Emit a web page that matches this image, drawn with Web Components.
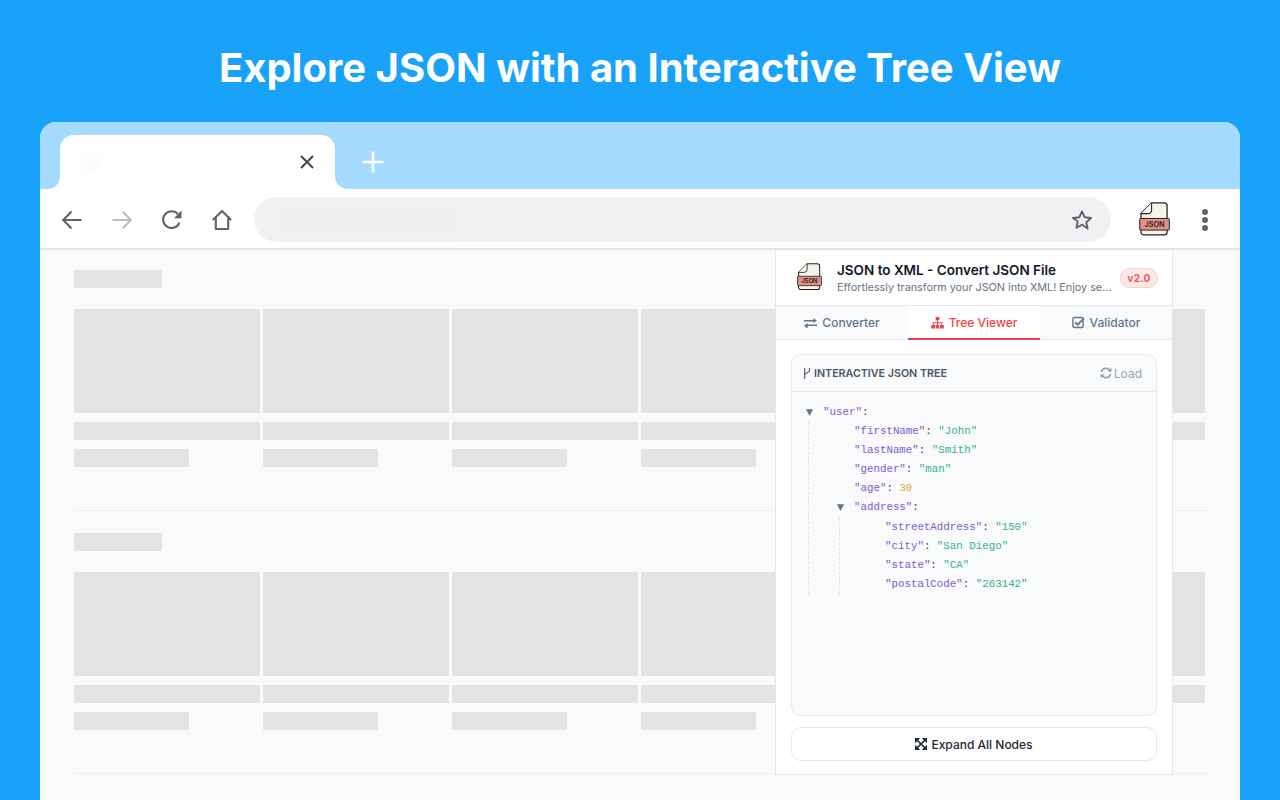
<!DOCTYPE html>
<html lang="en">
<head>
<meta charset="utf-8">
<title>Explore JSON with an Interactive Tree View</title>
<style>
html,body{margin:0;padding:0;height:800px;overflow:hidden;background:#18a2fa}
body{font-family:"Inter","Liberation Sans",sans-serif}
</style>
</head>
<body>
<promo-page heading="Explore JSON with an Interactive Tree View">
  <browser-window>
    <skeleton-section></skeleton-section>
    <skeleton-section></skeleton-section>
    <extension-popup slot="overlay"></extension-popup>
  </browser-window>
</promo-page>
<script>
function comp(name, html, setup){
  customElements.define(name, class extends HTMLElement{
    connectedCallback(){
      if(this.shadowRoot) return;
      const r=this.attachShadow({mode:'open'});
      r.innerHTML = typeof html==='function' ? html(this) : html;
      if(setup) setup(this,r);
    }
  });
}
const I={
 back:'<svg width="24" height="24" viewBox="0 0 24 24" fill="none" stroke="#5f6368" stroke-width="2.1"><path d="M21.5 12H3.500M11.500 3.600L3.200 12l8.300 8.400"/></svg>',
 fwd:'<svg width="24" height="24" viewBox="0 0 24 24" fill="none" stroke="#bdbdbd" stroke-width="2.1"><path d="M2.500 12h18M12.500 3.600l8.300 8.400-8.300 8.400"/></svg>',
 reload:'<svg width="24" height="24" viewBox="0 0 24 24" fill="none"><path d="M19.400 14.600A8.400 8.400 0 1 1 17.800 6" stroke="#5f6368" stroke-width="2.1"/><path d="M21.500 2.600v7.600h-7.600z" fill="#5f6368"/></svg>',
 home:'<svg width="24" height="24" viewBox="0 0 24 24" fill="none" stroke="#5f6368" stroke-width="2.1" stroke-linejoin="round"><path d="M2.800 12L12 3l9.200 9M5.800 10v11h12.400V10"/></svg>',
 star:'<svg width="22" height="22" viewBox="0 0 24 24" fill="none" stroke="#5f6368" stroke-width="2" stroke-linejoin="round"><path d="M12 2.600l2.900 6.400 7 .8-5.200 4.700 1.400 6.900L12 17l-6.100 3.400 1.400-6.900L2.100 9.800l7-.8z"/></svg>',
 close:'<svg width="16" height="16" viewBox="0 0 16 16" stroke="#444" stroke-width="1.9" fill="none"><path d="M2 2l12 12M14 2L2 14"/></svg>',
 plus:'<svg width="24" height="24" viewBox="0 0 24 24" stroke="#fff" stroke-width="2.6" fill="none"><path d="M12 1.500v21M1.500 12h21"/></svg>',
 exchange:'<svg width="13" height="12" viewBox="0 0 13 12" fill="currentColor"><path d="M0 3h9.300V.9L13 3.800 9.300 6V4.600H0zM13 7.400H3.700V6L0 8.700l3.700 2.700V9H13z"/></svg>',
 sitemap:'<svg width="13" height="12" viewBox="0 0 13 12" fill="currentColor"><path d="M4.700 0h3.600v3.300H7V5.200h4.300V8h1.500v3.500H8.900V8h1.400V6.200H7V8h1.200v3.500H4.800V8H6V6.200H2.700V8h1.400v3.500H.2V8h1.500V5.200H6V3.300H4.700z"/></svg>',
 check:'<svg width="13" height="13" viewBox="0 0 13 13" fill="none" stroke="currentColor"><rect x=".9" y="1.500" width="10.200" height="10" rx="1.500" stroke-width="1.400"/><path d="M3.300 6.300l2.400 2.400 6.200-6.300" stroke-width="1.900"/></svg>',
 branch:'<svg width="8" height="11" viewBox="0 0 8 11" fill="none" stroke="#475569" stroke-width="1.100"><path d="M1.700 0v11M6.500 0v2.500C6.500 5 1.700 4.500 1.700 7"/></svg>',
 sync:'<svg width="12" height="12" viewBox="0 0 12 12" fill="none" stroke="#94a3b8" stroke-width="1.700"><path d="M1.500 5A4.700 4.700 0 0 1 9.700 3M10.500 7A4.700 4.700 0 0 1 2.300 9"/><path d="M11.500 .6v4.200H7.300zM.5 11.400V7.200h4.200z" fill="#94a3b8" stroke="none"/></svg>',
 expand:'<svg width="12" height="12" viewBox="0 0 12 12" fill="#1f2937"><path d="M0 0h5.200L0 5.200zM12 0v5.200L6.800 0zM0 12V6.800L5.200 12zM12 12H6.800L12 6.800z"/><path d="M2 2l8 8M10 2l-8 8" stroke="#1f2937" stroke-width="1.700"/></svg>'
};

comp('promo-page', h=>`<style>
:host{display:flex;flex-direction:column;height:800px;overflow:hidden}
h1{margin:0;height:122px;display:flex;align-items:center;justify-content:center;padding-top:13px;box-sizing:border-box;color:#fff;font:700 40px/1 "Inter","Liberation Sans",sans-serif}
.w{padding:0 40px;flex:1;min-height:0;display:flex}
</style><h1>${h.getAttribute('heading')}</h1><div class="w"><slot></slot></div>`);

comp('browser-window',`<style>
:host{display:flex;flex-direction:column;flex:1;border-radius:16px 16px 0 0;overflow:hidden;background:#fafafa;position:relative}
.content{flex:1;min-height:0;padding:0 34px 0 34px;overflow:hidden}
</style>
<tab-strip></tab-strip><browser-toolbar></browser-toolbar>
<div class="content"><slot></slot></div><slot name="overlay"></slot>`);

comp('tab-strip',`<style>
:host{display:flex;align-items:flex-end;height:67px;background:#a3dafd;padding-left:20px;flex:none}
.tab{width:275px;height:54px;background:#fff;border-radius:14px 14px 0 0;position:relative;display:flex;align-items:center;justify-content:flex-end;padding-right:20px;box-sizing:border-box}
.tab::before,.tab::after{content:"";position:absolute;bottom:0;width:12px;height:12px}
.tab::before{left:-12px;background:radial-gradient(circle at 0 0,transparent 11.500px,#fff 12px)}
.tab::after{right:-12px;background:radial-gradient(circle at 100% 0,transparent 11.500px,#fff 12px)}
.ghost{position:absolute;left:20px;top:17px;width:20px;height:20px;border-radius:50%;background:#fbfbfb;filter:blur(2px)}
.add{margin-left:26px;margin-bottom:15px;display:flex}
svg{display:block}
</style><div class="tab"><span class="ghost"></span>${I.close}</div><div class="add">${I.plus}</div>`);

comp('browser-toolbar',`<style>
:host{display:flex;align-items:center;height:61px;box-sizing:border-box;background:#fff;border-bottom:2px solid #e3e3e3;padding:2px 0 0 6.500px;flex:none}
.b{width:50px;height:24px;display:flex;justify-content:center;flex:none}
svg{display:block}
.url{flex:1;height:45px;margin-left:7.500px;background:#f0f1f3;border-radius:23px;display:flex;align-items:center;padding:0 18.500px 0 22px;justify-content:space-between;overflow:hidden}
.blur{width:185px;height:26px;background:#eceef0;filter:blur(4px)}
.ext{width:30px;margin-left:28px;flex:none;display:flex;justify-content:center}
.dots{width:6px;margin:0 32px 0 33px;display:flex;flex-direction:column;gap:2px;flex:none}
.dots i{width:6px;height:6px;border-radius:50%;background:#666}
</style>
<span class="b">${I.back}</span><span class="b">${I.fwd}</span><span class="b">${I.reload}</span><span class="b">${I.home}</span>
<div class="url"><span class="blur"></span>${I.star}</div>
<div class="ext"><json-file-icon width="31"></json-file-icon></div>
<div class="dots"><i></i><i></i><i></i></div>`);

comp('json-file-icon', h=>{const w=+h.getAttribute('width')||32;return `<style>:host{display:block;flex:none;line-height:0}text{font-family:"Inter","Liberation Sans",sans-serif}</style>
<svg width="${w}" height="${w*36/32}" viewBox="0 0 32 36">
<path d="M13 1H26a3 3 0 0 1 3 3V31a3 3 0 0 1-3 3H5a3 3 0 0 1-3-3V12Z" fill="#f6f3ea" stroke="#222" stroke-width="1.300"/>
<path d="M13 1V8q0 4-4 4H2" fill="#fff" stroke="#222" stroke-width="1.100"/>
<rect x=".7" y="17" width="30.600" height="12" rx="1" fill="#e38e84" stroke="#222" stroke-width="1"/>
<text x="16" y="25.800" text-anchor="middle" font-size="7.500" font-weight="600" fill="#1d1d1d">JSON</text>
</svg>`});

comp('skeleton-section',`<style>
:host{display:block;height:261px;box-sizing:border-box;padding-top:20px;border-bottom:1px solid #efefef;margin:0 -2px 2px 0}
.t{width:88px;height:18px;background:#e3e3e3;border-radius:1px;margin-bottom:21px}
.g{display:grid;grid-template-columns:repeat(6,185.500px);column-gap:3.600px}
</style><div class="t"></div><div class="g">
<skeleton-tile></skeleton-tile><skeleton-tile></skeleton-tile><skeleton-tile></skeleton-tile><skeleton-tile></skeleton-tile><skeleton-tile></skeleton-tile><skeleton-tile></skeleton-tile>
</div>`);
comp('skeleton-tile',`<style>
:host{display:flex;flex-direction:column;gap:9px}
div{background:#e3e3e3;border-radius:1px}
.a{height:104px}.b{height:18px}.c{height:17.500px;width:115px}
</style><div class="a"></div><div class="b"></div><div class="c"></div>`);

comp('extension-popup',`<style>
:host{position:absolute;left:735px;top:128px;width:398px;height:525px;box-sizing:border-box;background:#fff;border:1px solid #e5e7eb;border-top:0;display:flex;flex-direction:column;color:#111827;font-family:"Inter","Liberation Sans",sans-serif}
header{height:55px;box-sizing:border-box;display:flex;align-items:center;padding:2px 14px 0 21px;flex:none}
header json-file-icon{margin-top:-2px}
.txt{margin-left:15px;flex:none}
.title{font-size:13.500px;font-weight:600;line-height:17px;white-space:nowrap;color:#111827}
.sub{font-size:10.800px;line-height:17px;color:#64748b;white-space:nowrap}
.badge{margin-left:auto;margin-top:-2px;font-size:10px;font-weight:700;color:#ef5a5a;background:#fde8e8;border:1px solid #fbcfcf;border-radius:10px;width:38px;height:20px;box-sizing:border-box;display:flex;align-items:center;justify-content:center;letter-spacing:.3px}
nav{display:grid;grid-template-columns:132px 132px 132px;height:35px;box-sizing:border-box;background:#f8fafc;border-top:1px solid #e5e7eb;border-bottom:1px solid #e5e7eb;flex:none}
main{flex:1;min-height:0;padding:14px 15px 0;display:flex;flex-direction:column}
</style>
<header><json-file-icon width="25"></json-file-icon><div class="txt"><div class="title">JSON to XML - Convert JSON File</div><div class="sub">Effortlessly transform your JSON into XML! Enjoy se...</div></div><span class="badge">v2.0</span></header>
<nav><popup-tab icon="exchange">Converter</popup-tab><popup-tab icon="sitemap" active>Tree Viewer</popup-tab><popup-tab icon="check">Validator</popup-tab></nav>
<main><tree-panel></tree-panel><expand-button></expand-button></main>`);

comp('popup-tab', h=>`<style>
:host{display:flex;align-items:center;justify-content:center;gap:5px;font-size:12px;font-weight:500;color:${h.hasAttribute('active')?'#ef4444':'#64748b'};background:${h.hasAttribute('active')?'#fff':'transparent'};box-sizing:border-box;height:34px;${h.hasAttribute('active')?'border-bottom:2px solid #ef4444;padding-top:1px;':'padding-bottom:1px;'}}
svg{display:block}
</style>${I[h.getAttribute('icon')]}<slot></slot>`);

comp('tree-panel',`<style>
:host{display:flex;flex-direction:column;height:362px;box-sizing:border-box;border:1px solid #e5e7eb;border-radius:10px;background:#f8fafc;overflow:hidden;flex:none}
.h{height:37px;flex:none;box-sizing:border-box;border-bottom:1px solid #e5e9f0;display:flex;align-items:center;padding:0 14px 0 11px;background:#fafbfc}
.l{display:flex;align-items:center;gap:3px;font-size:10.700px;font-weight:600;color:#475569}
.r{margin-left:auto;display:flex;align-items:center;gap:2px;font-size:12px;color:#94a3b8}
svg{display:block}
.b{padding:11px 0 0 14px;font:10.800px/19.100px "Liberation Mono",monospace}
</style>
<div class="h"><span class="l">${I.branch}INTERACTIVE JSON TREE</span><span class="r">${I.sync}Load</span></div>
<div class="b">
<json-node k="user">
 <json-leaf k="firstName" v='"John"'></json-leaf>
 <json-leaf k="lastName" v='"Smith"'></json-leaf>
 <json-leaf k="gender" v='"man"'></json-leaf>
 <json-leaf k="age" v="30" num></json-leaf>
 <json-node k="address">
  <json-leaf k="streetAddress" v='"150"'></json-leaf>
  <json-leaf k="city" v='"San Diego"'></json-leaf>
  <json-leaf k="state" v='"CA"'></json-leaf>
  <json-leaf k="postalCode" v='"263142"'></json-leaf>
 </json-node>
</json-node>
</div>`);

comp('json-node', h=>`<style>
:host{display:block}
.row{display:flex;height:19.100px;white-space:pre}
.a{width:17px;flex:none;color:#64748b;font:9px/19.100px "DejaVu Sans",sans-serif}
.k{color:#7c5cd6}.c{color:#374151}
.kids{margin-left:2px;border-left:1px dashed #dfe2e6;padding-left:28px}
</style><div class="row"><span class="a">▼</span><span class="k">"${h.getAttribute('k')}"</span><span class="c">:</span></div><div class="kids"><slot></slot></div>`);

comp('json-leaf', h=>`<style>
:host{display:block;padding-left:17px;height:19.100px;white-space:pre}
.k{color:#7c5cd6}.c{color:#374151}.s{color:#34b38a}.n{color:#eaa53a}
</style><span class="k">"${h.getAttribute('k')}"</span><span class="c">: </span><span class="${h.hasAttribute('num')?'n':'s'}">${h.getAttribute('v')}</span>`);

comp('expand-button',`<style>
:host{display:flex;align-items:center;justify-content:center;gap:4px;height:34px;margin-top:11px;box-sizing:border-box;border:1px solid #e5e7eb;border-radius:10px;background:#fff;font-size:12px;font-weight:500;color:#1f2937;flex:none}
svg{display:block}
</style>${I.expand}<slot>Expand All Nodes</slot>`);
</script>
</body>
</html>
